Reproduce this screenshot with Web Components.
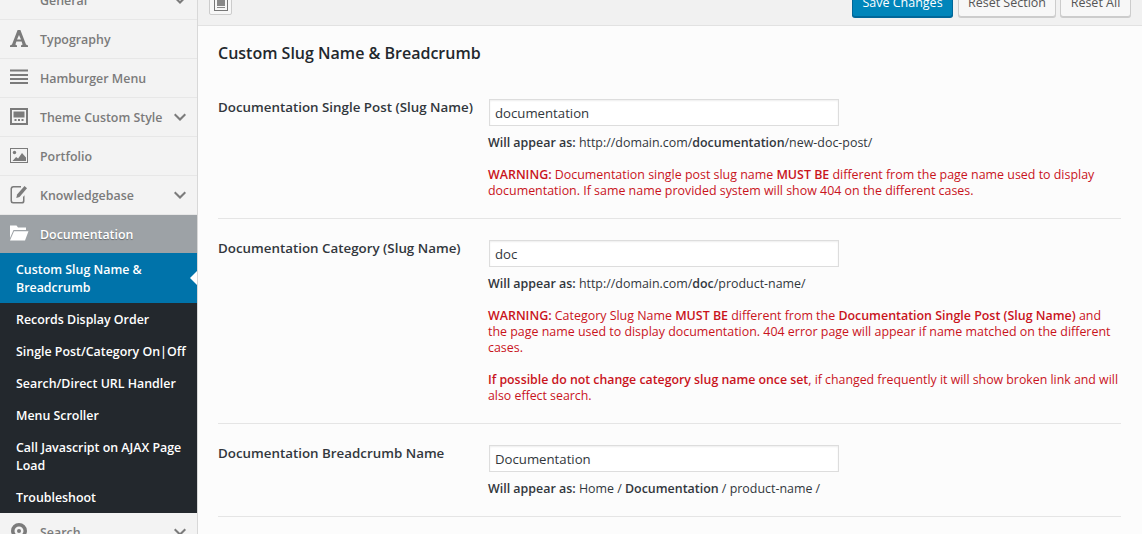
<!DOCTYPE html>
<html>
<head>
<meta charset="utf-8">
<title>Documentation options</title>
<style>
  html, body { margin: 0; height: 534px; overflow: hidden; background: #fcfcfc; }
  body { font-family: "Open Sans", "Noto Sans", sans-serif; }
  option-row span { font-weight: 400; }
  option-row span b { font-weight: 600; }
  option-row p.warn b { font-weight: 600; }
</style>
</head>
<body>
<options-panel>
  <side-menu slot="side">
    <menu-item icon="general" arrow style="margin-top:-19px">General</menu-item>
    <menu-item icon="type">Typography</menu-item>
    <menu-item icon="burger">Hamburger Menu</menu-item>
    <menu-item icon="style" arrow>Theme Custom Style</menu-item>
    <menu-item icon="image">Portfolio</menu-item>
    <menu-item icon="edit" arrow>Knowledgebase</menu-item>
    <menu-item icon="folder" open>Documentation</menu-item>
    <sub-item active>Custom Slug Name &amp; Breadcrumb</sub-item>
    <sub-item>Records Display Order</sub-item>
    <sub-item>Single Post/Category On|Off</sub-item>
    <sub-item>Search/Direct URL Handler</sub-item>
    <sub-item>Menu Scroller</sub-item>
    <sub-item>Call Javascript on AJAX Page Load</sub-item>
    <sub-item>Troubleshoot</sub-item>
    <menu-item icon="search" arrow>Search</menu-item>
  </side-menu>
  <top-bar slot="bar"></top-bar>
  <h-title slot="main">Custom Slug Name &amp; Breadcrumb</h-title>
  <option-row slot="main" label="Documentation Single Post (Slug Name)" value="documentation" first>
    <p>Will appear as: <span>http://domain.com/<b>documentation</b>/new-doc-post/</span></p>
    <p class="warn"><b>WARNING:</b> Documentation single post slug name <b>MUST BE</b> different from the page name used to display documentation. If same name provided system will show 404 on the different cases.</p>
  </option-row>
  <option-row slot="main" label="Documentation Category (Slug Name)" value="doc">
    <p>Will appear as: <span>http://domain.com/<b>doc</b>/product-name/</span></p>
    <p class="warn"><b>WARNING:</b> Category Slug Name <b>MUST BE</b> different from the <b>Documentation Single Post (Slug Name)</b> and the page name used to display documentation. 404 error page will appear if name matched on the different cases.</p>
    <p class="warn tight"><b>If possible do not change category slug name once set</b>, if changed frequently it will show broken link and will also effect search.</p>
  </option-row>
  <option-row slot="main" label="Documentation Breadcrumb Name" value="Documentation" last>
    <p>Will appear as: <span>Home / <b>Documentation</b> / product-name /</span></p>
  </option-row>
</options-panel>

<script>
const ICONS = {
  general: '<path fill-rule="evenodd" d="M0 -11h18V7H0zM2 -9V5h14V-9z"/><rect x="7" y="0" width="4" height="3"/>',
  type: '<path d="M7.6 0h2.8L16 14.6l2 .9V17h-7v-1.5l1.6-.9-1-3H6.4l-1 3 1.6.9V17H0v-1.5l2-.9zM9 5 7 9.6h4z"/>',
  burger: '<path d="M0 .5h18v2H0zM0 5h18v2H0zM0 9h18v2H0zM0 13h18v2H0z"/>',
  style: '<path fill-rule="evenodd" d="M0 0h18v17H0zM2 2v13h14V2z"/><path d="M3.5 3.5h11v6h-11zM4.5 11h2v2h-2zM8 11h2v2H8zM11.5 11h2v2h-2z"/>',
  image: '<path fill-rule="evenodd" d="M0 1h18v15H0zM1 2v13h16V2z"/><circle cx="4.5" cy="5.5" r="1.7"/><path d="M2.5 14l3.6-4 2 1.4L12 6l4 4.5V14z"/>',
  edit: '<path d="M3 0h8v1.5H3.5a1.5 1.5 0 0 0-1.5 1.5v11.5A1.5 1.5 0 0 0 3.5 16h8a1.5 1.5 0 0 0 1.5-1.5V11l1.5-1.8v5.8a2.6 2.6 0 0 1-2.6 2.6H3A2.6 2.6 0 0 1 .5 15V2.6A2.6 2.6 0 0 1 3 0z"/><path d="M14.5 0 17 2.2 9.5 11l-3.2 1 .8-3.4z"/>',
  folder: '<path d="M0 .5h6.5l1.5 2h8V5H3.5L0 13z"/><path d="M4 6.2h14.5L15 15.5H0z"/>',
  search: '<path fill-rule="evenodd" d="M9 0a8 8 0 0 1 8 8c0 3.5-3 7-8 10-5-3-8-6.5-8-10a8 8 0 0 1 8-8zm0 3.5a4.5 4.5 0 1 0 0 9 4.5 4.5 0 0 0 0-9z"/><circle cx="9" cy="8" r="2"/>'
};

class OptionsPanel extends HTMLElement {
  constructor() {
    super();
    this.attachShadow({ mode: 'open' });
    this.shadowRoot.innerHTML = `
      <style>
        :host { display: flex; height: 534px; overflow: hidden; }
        .side { width: 197px; flex: none; border-right: 1px solid #d8d8d8; background: #f3f3f3; }
        .body { flex: 1; min-width: 0; background: #fcfcfc; }
        .main { padding: 0 21px 0 20px; }
      </style>
      <div class="side"><slot name="side"></slot></div>
      <div class="body">
        <slot name="bar"></slot>
        <div class="main"><slot name="main"></slot></div>
      </div>
    `;
  }
}

class SideMenu extends HTMLElement {
  constructor() {
    super();
    this.attachShadow({ mode: 'open' });
    this.shadowRoot.innerHTML = `
      <style>:host { display: block; }</style>
      <slot></slot>
    `;
  }
}

class MenuItem extends HTMLElement {
  connectedCallback() {
    const icon = ICONS[this.getAttribute('icon')] || '';
    const arrow = this.hasAttribute('arrow')
      ? '<svg class="arrow" viewBox="0 0 12 8" width="12" height="8"><path d="M1.4 .6 6 5l4.6-4.4L12 2 6 8 0 2z"/></svg>' : '';
    this.attachShadow({ mode: 'open' });
    this.shadowRoot.innerHTML = `
      <style>
        :host {
          display: flex; align-items: center; box-sizing: border-box; height: 39px;
          padding-left: 10px; padding-right: 11px;
          border-bottom: 1px solid #e7e7e7;
          color: #7b7b7b; font-size: 12.4px; font-weight: 600;
        }
        :host([open]) { height: 38px; background: #9da2a6; color: #fff; border-bottom: 0; text-shadow: 0 1px 1px rgba(0,0,0,.35); }
        .icon { width: 18px; height: 18px; flex: none; fill: currentColor; margin-right: 12px; overflow: visible; }
        .label { flex: 1; white-space: nowrap; }
        .arrow { fill: currentColor; flex: none; }
      </style>
      <svg class="icon" viewBox="0 0 18 18">${icon}</svg>
      <span class="label"><slot></slot></span>
      ${arrow}
    `;
  }
}

class SubItem extends HTMLElement {
  constructor() {
    super();
    this.attachShadow({ mode: 'open' });
    this.shadowRoot.innerHTML = `
      <style>
        :host {
          display: block; position: relative; padding: 8px 8px 6px 16px;
          background: #23282d; color: #fff; font-size: 12.4px; font-weight: 600; line-height: 18px;
        }
        :host([active]) { background: #0073aa; }
        :host([active])::after {
          content: ''; position: absolute; right: 0; top: 18px;
          border: 7px solid transparent; border-right-color: #fff; border-left-width: 0;
        }
      </style>
      <slot></slot>
    `;
  }
}

class TopBar extends HTMLElement {
  constructor() {
    super();
    this.attachShadow({ mode: 'open' });
    this.shadowRoot.innerHTML = `
      <style>
        :host {
          display: flex; align-items: flex-end; box-sizing: border-box; height: 26px;
          padding: 0 11px 8px 11px; background: #f1f1f1; border-bottom: 1px solid #e2e2e2;
        }
        .expand {
          box-sizing: border-box; width: 23px; height: 30px; flex: none; margin-right: auto; margin-bottom: 2px;
          display: flex; align-items: flex-end; justify-content: center; padding-bottom: 3px;
          border: 1px solid #ccc; border-radius: 2px; background: #f7f7f7;
        }
        button {
          box-sizing: border-box; height: 30px; padding: 0; border-radius: 3px; flex: none;
          border: 1px solid #ccc; background: #f7f7f7; color: #555;
          font: 400 12.5px "Open Sans", "Noto Sans", sans-serif; box-shadow: 0 1px 0 #ccc;
        }
        .primary { width: 101px; background: #0085ba; border-color: #0073aa #006799 #006799; color: #fff; box-shadow: 0 1px 0 #006799; }
        .section { width: 98px; margin-left: 5px; }
        .all { width: 71px; margin-left: 4px; }
      </style>
      <span class="expand">
        <svg viewBox="0 0 14 16" width="14" height="16"><path fill="#777" fill-rule="evenodd" d="M0 0h14v16H0zM1 1v14h12V1z"/><path fill="#888" d="M3 2h8v9H3zM3 12h8v1H3z"/></svg>
      </span>
      <button class="primary">Save Changes</button>
      <button class="section">Reset Section</button>
      <button class="all">Reset All</button>
    `;
  }
}

class HTitle extends HTMLElement {
  constructor() {
    super();
    this.attachShadow({ mode: 'open' });
    this.shadowRoot.innerHTML = `
      <style>
        :host { display: block; height: 37px; padding-top: 15px;
          font-size: 16px; font-weight: 600; line-height: 24px; color: #23282d; }
      </style>
      <slot></slot>
    `;
  }
}

class OptionRow extends HTMLElement {
  connectedCallback() {
    this.attachShadow({ mode: 'open' });
    this.shadowRoot.innerHTML = `
      <style>
        :host { display: grid; grid-template-columns: 270px 1fr; padding: 21px 0 19px; border-top: 1px solid #e5e5e5; }
        :host([first]) { border-top: 0; }
        :host([last]) { border-bottom: 1px solid #e5e5e5; }
        .label { margin-top: -1px; font-size: 13.35px; font-weight: 600; line-height: 18px; color: #32373c; white-space: nowrap; }
        input {
          display: block; box-sizing: border-box; width: 350px; height: 27px; margin: 0 0 9px 1px;
          padding: 0 5px; border: 1px solid #ddd; background: #fff; color: #32373c;
          font: 400 13.2px "Open Sans", "Noto Sans", sans-serif; box-shadow: inset 0 1px 2px rgba(0,0,0,.07);
        }
        ::slotted(p) { margin: 0 0 16px; font-size: 12.43px; line-height: 16px; font-weight: 600; color: #32373c; }
        ::slotted(p:last-child) { margin-bottom: 0; }
        ::slotted(p.warn) { font-weight: 400; color: #c9141c; }
        ::slotted(p.tight) { font-size: 12.33px; }
      </style>
      <div class="label">${this.getAttribute('label')}</div>
      <div>
        <input type="text" value="${this.getAttribute('value')}">
        <slot></slot>
      </div>
    `;
  }
}

customElements.define('options-panel', OptionsPanel);
customElements.define('side-menu', SideMenu);
customElements.define('menu-item', MenuItem);
customElements.define('sub-item', SubItem);
customElements.define('top-bar', TopBar);
customElements.define('h-title', HTitle);
customElements.define('option-row', OptionRow);
</script>
</body>
</html>
